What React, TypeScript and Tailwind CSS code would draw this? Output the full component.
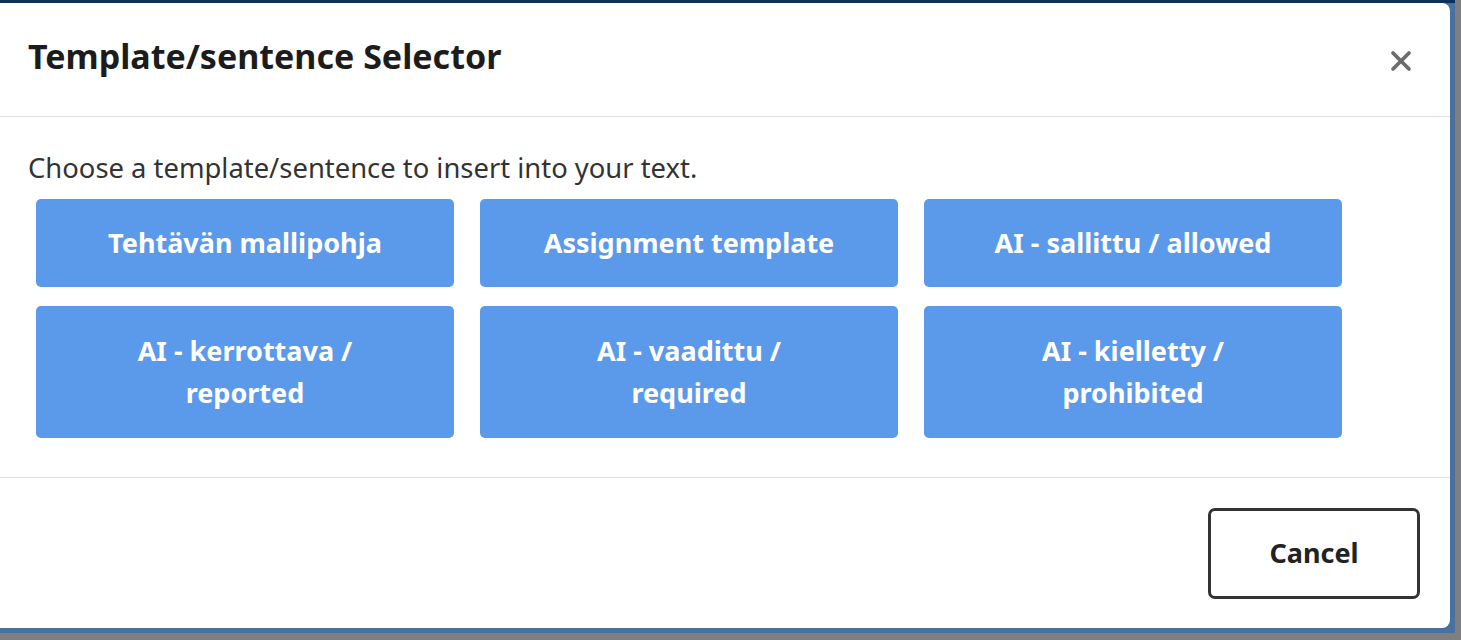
import { X } from 'lucide-react'

const templates = [
  ['Tehtävän mallipohja'],
  ['Assignment template'],
  ['AI - sallittu / allowed'],
  ['AI - kerrottava /', 'reported'],
  ['AI - vaadittu /', 'required'],
  ['AI - kielletty /', 'prohibited'],
]

export default function App() {
  return (
    <div className="relative h-[640px] w-full overflow-hidden bg-[#7f7f7f] font-['Noto_Sans','Open_Sans',sans-serif]">
      {/* backdrop panel behind the dialog */}
      <div className="h-[633px] w-[1455px] border-t-[3px] border-[#0c2f5c] bg-[#49719f]" />

      <div className="absolute left-[-8px] top-[3px] flex h-[625px] w-[1458px] flex-col rounded-[8px] bg-white">
        <div className="flex h-[114px] shrink-0 items-center justify-between border-b border-[#dee2e6] pl-[36px] pr-[33px]">
          <h2 className="mb-[6px] text-[34px] font-bold text-[#1c1c1c]">Template/sentence Selector</h2>
          <button className="mt-[2px] text-[#6c6c6c]">
            <X className="h-[32px] w-[32px]" strokeWidth={2.8} />
          </button>
        </div>

        <div className="shrink-0 border-b border-[#dee2e6] pb-[39px] pl-[36px] pt-[35px]">
          <p className="text-[27.4px] leading-[32px] text-[#333]">
            Choose a template/sentence to insert into your text.
          </p>
          <div className="ml-[8px] mt-[15px] grid w-[1306px] grid-cols-3 grid-rows-[88px_132px] gap-x-[26px] gap-y-[19px]">
            {templates.map((lines) => (
              <button
                key={lines.join(' ')}
                className="flex flex-col items-center justify-center rounded-[5px] bg-[#5b9aea] text-center text-[27px] font-bold leading-[42px] text-white"
              >
                {lines.map((line) => (
                  <div key={line}>{line}</div>
                ))}
              </button>
            ))}
          </div>
        </div>

        <div className="flex flex-1 items-center justify-end pr-[30px]">
          <button className="h-[91px] w-[212px] rounded-[7px] border-[3px] border-[#333] text-[27px] font-bold text-[#222]">
            Cancel
          </button>
        </div>
      </div>
    </div>
  )
}
